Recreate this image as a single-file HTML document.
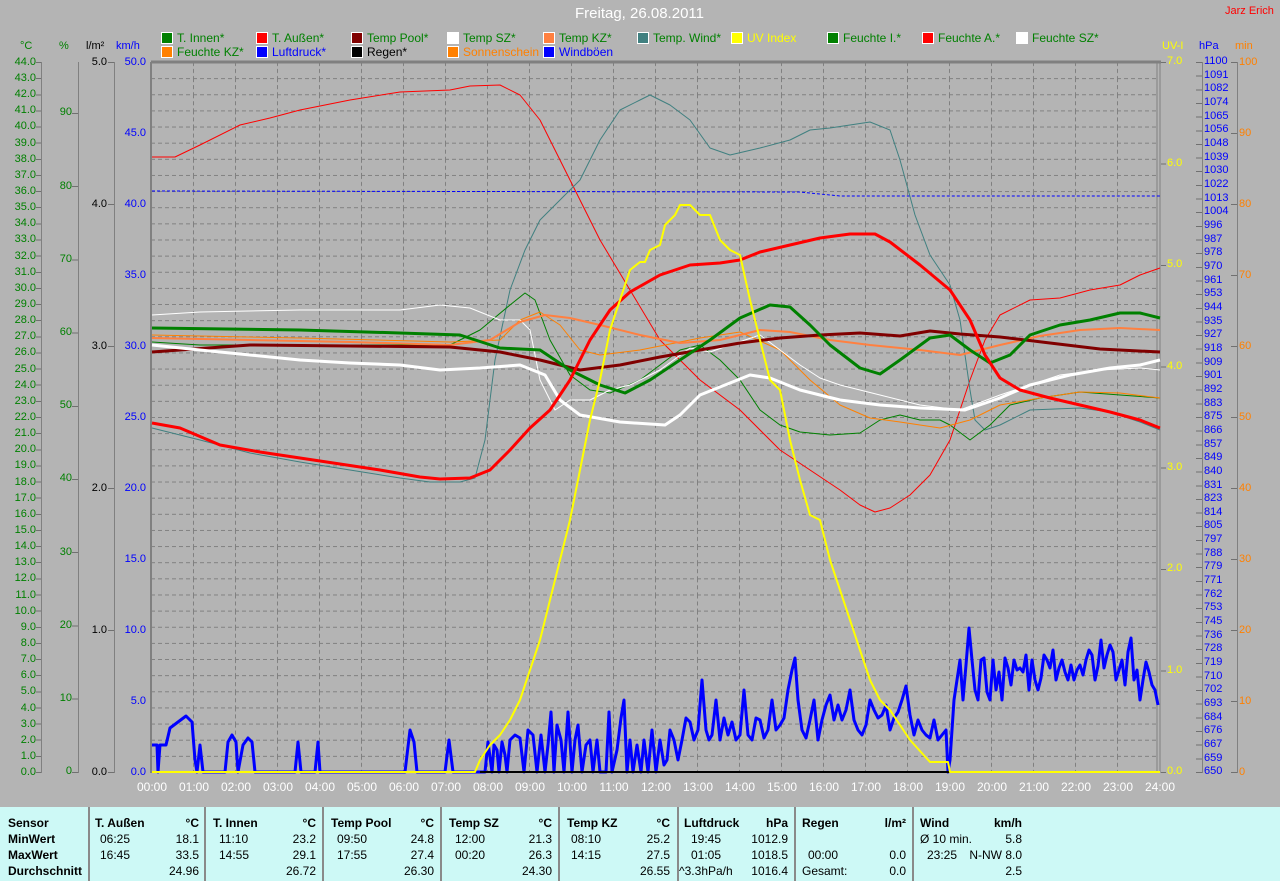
<!DOCTYPE html>
<html><head><meta charset="utf-8">
<style>
*{margin:0;padding:0;box-sizing:border-box}
body{width:1280px;height:881px;overflow:hidden;background:#b4b4b4;font-family:"Liberation Sans",sans-serif;position:relative}
.a{position:absolute}
.col{position:absolute;font-size:11px;white-space:pre}
.r{text-align:right}
.lg{position:absolute;font-size:12px;white-space:nowrap;height:14px;line-height:14px}
.lg i{display:inline-block;width:12px;height:12px;border:1px solid #fff;vertical-align:-2px;margin-right:4px}
.tb{position:absolute;left:0;top:807px;width:1280px;height:74px;background:#cdf9f6;font-size:12px}
.tb div{position:absolute;white-space:nowrap;line-height:16px}
.tb .b{font-weight:bold}
.sep{position:absolute;top:0;width:2px;height:74px;background:#8a8a8a}
</style></head><body>

<div class="a" style="left:575px;top:5px;font-size:15px;color:#fff">Freitag, 26.08.2011</div>
<div class="a" style="left:1225px;top:5px;font-size:11px;color:#f00">Jarz Erich</div>

<!-- legend -->
<div class="lg" style="left:161px;top:31px;color:#008000"><i style="background:#008000"></i>T. Innen*</div>
<div class="lg" style="left:256px;top:31px;color:#008000"><i style="background:#f00"></i>T. Außen*</div>
<div class="lg" style="left:351px;top:31px;color:#008000"><i style="background:#800000"></i>Temp Pool*</div>
<div class="lg" style="left:447px;top:31px;color:#008000"><i style="background:#fff"></i>Temp SZ*</div>
<div class="lg" style="left:543px;top:31px;color:#008000"><i style="background:#ff8040"></i>Temp KZ*</div>
<div class="lg" style="left:637px;top:31px;color:#008000"><i style="background:#408080"></i>Temp. Wind*</div>
<div class="lg" style="left:731px;top:31px;color:#ffff00"><i style="background:#ffff00"></i>UV Index</div>
<div class="lg" style="left:827px;top:31px;color:#008000"><i style="background:#008000"></i>Feuchte I.*</div>
<div class="lg" style="left:922px;top:31px;color:#008000"><i style="background:#f00"></i>Feuchte A.*</div>
<div class="lg" style="left:1016px;top:31px;color:#008000"><i style="background:#fff"></i>Feuchte SZ*</div>
<div class="lg" style="left:161px;top:45px;color:#008000"><i style="background:#ff8000"></i>Feuchte KZ*</div>
<div class="lg" style="left:256px;top:45px;color:#0000ff"><i style="background:#0000ff"></i>Luftdruck*</div>
<div class="lg" style="left:351px;top:45px;color:#000"><i style="background:#000"></i>Regen*</div>
<div class="lg" style="left:447px;top:45px;color:#ff8000"><i style="background:#ff8000"></i>Sonnenschein</div>
<div class="lg" style="left:543px;top:45px;color:#0000ff"><i style="background:#0000ff"></i>Windböen</div>

<!-- axis headers -->
<div class="a" style="left:20px;top:40px;font-size:11px;color:#008000">°C</div>
<div class="a" style="left:59px;top:40px;font-size:11px;color:#008000">%</div>
<div class="a" style="left:86px;top:40px;font-size:11px;color:#000">l/m²</div>
<div class="a" style="left:116px;top:40px;font-size:11px;color:#0000ff">km/h</div>
<div class="a" style="left:1162px;top:40px;font-size:11px;color:#ffff00">UV-I</div>
<div class="a" style="left:1199px;top:40px;font-size:11px;color:#0000ff">hPa</div>
<div class="a" style="left:1235px;top:40px;font-size:11px;color:#ff8000">min</div>

<!-- °C -->
<div class="col r" style="left:0;width:36px;top:53.93px;line-height:16.136px;color:#008000">44.0
43.0
42.0
41.0
40.0
39.0
38.0
37.0
36.0
35.0
34.0
33.0
32.0
31.0
30.0
29.0
28.0
27.0
26.0
25.0
24.0
23.0
22.0
21.0
20.0
19.0
18.0
17.0
16.0
15.0
14.0
13.0
12.0
11.0
10.0
9.0
8.0
7.0
6.0
5.0
4.0
3.0
2.0
1.0
0.0</div>
<div class="a" style="left:36px;top:62px;width:5px;height:712px;background:repeating-linear-gradient(to bottom,#707070 0 1px,transparent 1px 16.136px)"></div>
<div class="a" style="left:41px;top:62px;width:1px;height:711px;background:#808080"></div>

<!-- % -->
<div class="col r" style="left:40px;width:32px;top:76.4px;line-height:73.2px;color:#008000">90
80
70
60
50
40
30
20
10
0</div>
<div class="a" style="left:72px;top:113px;width:6px;height:660px;background:repeating-linear-gradient(to bottom,#707070 0 1px,transparent 1px 73.2px)"></div>
<div class="a" style="left:78px;top:62px;width:1px;height:711px;background:#808080"></div>

<!-- l/m2 -->
<div class="col r" style="left:80px;width:27px;top:-9px;line-height:142px;color:#000">5.0
4.0
3.0
2.0
1.0
0.0</div>
<div class="a" style="left:108px;top:62px;width:6px;height:712px;background:repeating-linear-gradient(to bottom,#707070 0 1px,transparent 1px 142px)"></div>
<div class="a" style="left:114px;top:62px;width:1px;height:711px;background:#808080"></div>

<!-- km/h -->
<div class="col r" style="left:115px;width:31px;top:26.5px;line-height:71px;color:#0000ff">50.0
45.0
40.0
35.0
30.0
25.0
20.0
15.0
10.0
5.0
0.0</div>

<!-- UV -->
<div class="col" style="left:1167px;top:11.3px;line-height:101.43px;color:#ffff00">7.0
6.0
5.0
4.0
3.0
2.0
1.0
0.0</div>
<div class="a" style="left:1161px;top:62px;width:5px;height:712px;background:repeating-linear-gradient(to bottom,#707070 0 1px,transparent 1px 101.43px)"></div>

<!-- hPa -->
<div class="col" style="left:1204px;top:55.17px;line-height:13.654px;color:#0000ff">1100
1091
1082
1074
1065
1056
1048
1039
1030
1022
1013
1004
996
987
978
970
961
953
944
935
927
918
909
901
892
883
875
866
857
849
840
831
823
814
805
797
788
779
771
762
753
745
736
728
719
710
702
693
684
676
667
659
650</div>
<div class="a" style="left:1196px;top:62px;width:6px;height:712px;background:repeating-linear-gradient(to bottom,#707070 0 1px,transparent 1px 13.654px)"></div>
<div class="a" style="left:1202px;top:62px;width:1px;height:711px;background:#808080"></div>

<!-- min -->
<div class="col" style="left:1239px;top:26.5px;line-height:71px;color:#ff8000">100
90
80
70
60
50
40
30
20
10
0</div>
<div class="a" style="left:1231px;top:62px;width:6px;height:712px;background:repeating-linear-gradient(to bottom,#707070 0 1px,transparent 1px 71px)"></div>
<div class="a" style="left:1237px;top:62px;width:1px;height:711px;background:#808080"></div>

<svg class="a" style="left:0;top:0" width="1280" height="881" viewBox="0 0 1280 881">
<defs>
<pattern id="g" x="151" y="62" width="42" height="16.136" patternUnits="userSpaceOnUse">
<line x1="0" y1="0.5" x2="42" y2="0.5" stroke="#808080" stroke-width="1" stroke-dasharray="4,3"/>
<line x1="0.5" y1="0" x2="0.5" y2="16.136" stroke="#808080" stroke-width="1" stroke-dasharray="4,3"/>
</pattern>
</defs>
<rect x="151" y="62" width="1008" height="710" fill="url(#g)"/>
<line x1="151" y1="62" x2="1161" y2="62" stroke="#808080" stroke-width="3"/>
<line x1="151" y1="62" x2="151" y2="773" stroke="#808080" stroke-width="2"/>
<line x1="1157" y1="62" x2="1157" y2="773" stroke="#808080" stroke-width="1"/>
<line x1="1160" y1="62" x2="1160" y2="773" stroke="#808080" stroke-width="1"/>
<g fill="none" stroke-linejoin="round">
<!-- Luftdruck -->
<polyline points="152,191 800,192 840,196 1160,196" stroke="#0000ff" stroke-width="1" stroke-dasharray="3,2"/>
<!-- Feuchte A thin red -->
<polyline stroke="#ff0000" stroke-width="1" points="152,157 175,157 200,145 240,125 270,118 300,110 350,100 400,92 450,90 470,86 500,85 520,95 540,120 560,160 580,200 600,240 630,290 660,340 700,380 740,410 780,450 810,470 840,490 860,505 875,512 890,508 910,495 930,475 950,440 970,380 985,340 1000,315 1030,300 1060,298 1090,290 1120,285 1140,275 1160,268"/>
<!-- Temp Wind teal -->
<polyline stroke="#408080" stroke-width="1" points="152,428 200,440 250,453 300,462 350,470 400,478 430,482 460,482 475,478 485,440 495,360 510,290 525,250 540,220 560,200 580,180 600,140 620,110 640,100 650,95 670,105 690,120 710,148 730,155 760,148 790,140 810,130 830,128 850,125 870,122 890,130 900,160 915,215 930,255 950,285 960,320 970,390 975,420 985,430 1000,425 1030,410 1080,408 1110,412 1140,422 1160,430"/>
<!-- Feuchte I thin green -->
<polyline stroke="#008000" stroke-width="1" points="152,342 200,345 300,345 450,345 480,330 510,305 525,293 535,300 550,340 570,375 590,390 610,393 640,380 660,365 680,350 700,345 720,360 740,380 760,410 780,425 800,432 830,435 860,433 880,420 900,415 920,420 940,420 950,425 970,440 990,425 1010,405 1040,398 1080,392 1120,395 1160,398"/>
<!-- Feuchte KZ thin orange -->
<polyline stroke="#ff8000" stroke-width="1" points="152,335 300,338 450,342 500,340 520,320 540,312 560,325 580,350 600,355 640,350 700,338 740,332 780,350 810,380 840,405 870,418 900,422 940,428 970,420 1000,405 1040,398 1080,392 1120,393 1160,398"/>
<!-- Feuchte SZ thin white -->
<polyline stroke="#ffffff" stroke-width="1" points="152,315 200,312 300,310 400,310 440,305 470,308 500,320 520,320 530,330 540,380 555,410 570,400 590,400 610,390 630,385 660,370 690,348 710,352 730,345 760,335 780,350 800,365 820,378 840,385 880,395 920,405 960,410 1000,395 1030,385 1060,375 1100,370 1140,368 1160,370"/>
<!-- Temp KZ -->
<polyline stroke="#ff8040" stroke-width="2" points="152,338 250,340 350,342 450,345 490,340 520,322 545,315 570,318 600,325 640,335 680,343 720,340 760,330 790,332 830,340 870,345 920,350 960,355 1000,345 1040,336 1080,330 1120,328 1160,330"/>
<!-- Temp Pool -->
<polyline stroke="#800000" stroke-width="3" points="152,352 250,345 350,346 450,347 500,352 540,360 580,370 620,365 660,357 700,350 740,343 780,338 820,335 860,333 900,336 930,331 960,334 1000,337 1050,343 1100,349 1160,352"/>
<!-- T Innen -->
<polyline stroke="#008000" stroke-width="3" points="152,328 300,330 400,333 460,335 500,348 540,350 570,370 600,385 625,393 650,380 680,360 710,340 740,318 770,305 790,307 810,325 830,345 860,368 880,374 900,360 930,338 950,335 970,350 990,363 1010,355 1030,335 1060,325 1090,320 1120,313 1140,313 1160,318"/>
<!-- Temp SZ -->
<polyline stroke="#ffffff" stroke-width="3" points="152,345 200,350 250,355 300,360 350,363 400,365 440,370 480,368 520,365 545,375 560,400 580,415 620,422 665,425 680,415 700,395 730,383 750,375 770,378 800,390 840,400 880,405 920,408 965,410 1000,398 1030,385 1070,375 1110,368 1140,365 1160,360"/>
<!-- T Aussen -->
<polyline stroke="#ff0000" stroke-width="3" points="152,423 180,428 220,445 260,452 300,458 340,464 380,470 420,477 440,479 470,478 490,470 510,450 530,428 550,410 570,380 590,340 610,310 630,292 660,275 690,265 720,263 740,260 760,252 790,245 820,238 850,234 875,234 890,242 920,265 950,290 970,320 985,355 1000,378 1020,390 1050,398 1080,405 1110,412 1140,420 1160,428"/>
<!-- wind gusts -->
<polyline stroke="#0000ff" stroke-width="3" points="152,745 157,745 158,772 160,745 166,745 170,728 178,722 186,716 192,722 195,760 197,772 200,745 203,772 205,772 225,772 228,742 232,735 236,742 238,772 243,745 248,738 252,742 255,772 295,772 298,742 301,772 315,772 318,742 320,772 405,772 410,730 414,742 417,772 445,772 449,740 453,772 485,772 488,742 492,772 494,745 497,750 499,772 502,742 505,755 507,772 510,740 515,735 520,738 524,772 528,730 533,735 537,772 541,735 545,772 548,745 551,712 554,772 557,725 561,740 564,772 568,712 572,772 575,740 578,725 582,772 586,745 590,740 593,772 597,740 600,772 606,772 609,712 612,772 617,750 621,718 624,700 627,772 630,740 633,772 637,745 641,772 644,740 648,772 652,730 656,772 660,740 664,765 667,760 670,730 674,740 678,760 682,740 686,718 690,722 694,740 698,730 702,680 706,730 709,740 712,735 716,700 720,740 724,718 728,735 732,722 736,740 740,735 744,690 748,735 752,740 756,718 760,720 764,738 768,730 772,700 776,730 780,725 784,718 788,690 792,670 795,658 798,700 802,730 806,738 810,720 814,700 818,740 822,720 826,705 830,695 834,720 838,705 842,720 846,710 850,690 854,720 858,730 862,735 866,725 870,700 874,710 878,718 882,715 886,705 890,730 894,718 898,712 902,700 906,686 910,715 914,735 918,720 922,730 926,735 930,738 934,720 938,740 942,735 946,730 948,772 950,760 952,730 954,700 957,680 960,660 963,700 966,665 969,628 972,660 975,690 978,700 981,660 984,658 987,692 990,700 993,660 996,690 999,672 1002,700 1005,658 1008,668 1011,685 1014,660 1017,670 1020,668 1023,672 1026,655 1029,690 1032,660 1035,680 1038,690 1041,678 1044,655 1047,660 1050,668 1053,650 1056,680 1059,668 1062,660 1065,672 1068,680 1071,665 1074,680 1077,670 1080,665 1083,675 1086,660 1089,650 1092,655 1095,680 1098,666 1101,640 1104,668 1107,655 1110,645 1113,652 1116,680 1119,670 1122,660 1125,685 1128,652 1131,638 1134,680 1137,670 1140,700 1143,680 1146,662 1149,672 1152,685 1155,690 1158,705"/>
<!-- rain baseline -->
<line x1="480" y1="772" x2="950" y2="772" stroke="#000" stroke-width="2"/>
<!-- UV -->
<polyline stroke="#ffff00" stroke-width="2" points="152,772 475,772 480,760 490,745 500,735 510,720 520,700 530,670 540,640 550,600 560,560 570,520 580,470 590,420 600,380 610,330 620,300 630,270 640,262 645,262 650,250 660,245 665,225 675,215 680,205 690,205 700,215 710,215 720,240 730,250 740,255 750,300 760,340 770,380 780,390 790,440 800,480 810,515 820,520 830,560 840,590 850,620 860,650 870,680 880,700 890,710 900,725 910,740 930,762 948,762 950,772 1160,772"/>
</g>
<g fill="#fff" font-size="12" font-family="Liberation Sans, sans-serif" text-anchor="middle">
<text x="152" y="791">00:00</text><text x="194" y="791">01:00</text><text x="236" y="791">02:00</text><text x="278" y="791">03:00</text><text x="320" y="791">04:00</text><text x="362" y="791">05:00</text><text x="404" y="791">06:00</text><text x="446" y="791">07:00</text><text x="488" y="791">08:00</text><text x="530" y="791">09:00</text><text x="572" y="791">10:00</text><text x="614" y="791">11:00</text><text x="656" y="791">12:00</text><text x="698" y="791">13:00</text><text x="740" y="791">14:00</text><text x="782" y="791">15:00</text><text x="824" y="791">16:00</text><text x="866" y="791">17:00</text><text x="908" y="791">18:00</text><text x="950" y="791">19:00</text><text x="992" y="791">20:00</text><text x="1034" y="791">21:00</text><text x="1076" y="791">22:00</text><text x="1118" y="791">23:00</text><text x="1160" y="791">24:00</text>
</g>
</svg>

<div class="tb">
<div class="sep" style="left:88px"></div><div class="sep" style="left:204px"></div><div class="sep" style="left:322px"></div><div class="sep" style="left:440px"></div><div class="sep" style="left:558px"></div><div class="sep" style="left:677px"></div><div class="sep" style="left:794px"></div><div class="sep" style="left:912px"></div>

<div class="b" style="left:8px;top:8px">Sensor</div>
<div class="b" style="left:8px;top:24px">MinWert</div>
<div class="b" style="left:8px;top:40px">MaxWert</div>
<div class="b" style="left:8px;top:56px">Durchschnitt</div>

<div class="b" style="left:95px;top:8px">T. Außen</div><div class="b" style="right:1081px;top:8px">°C</div>
<div style="left:100px;top:24px">06:25</div><div style="right:1081px;top:24px">18.1</div>
<div style="left:100px;top:40px">16:45</div><div style="right:1081px;top:40px">33.5</div>
<div style="right:1081px;top:56px">24.96</div>

<div class="b" style="left:213px;top:8px">T. Innen</div><div class="b" style="right:964px;top:8px">°C</div>
<div style="left:219px;top:24px">11:10</div><div style="right:964px;top:24px">23.2</div>
<div style="left:219px;top:40px">14:55</div><div style="right:964px;top:40px">29.1</div>
<div style="right:964px;top:56px">26.72</div>

<div class="b" style="left:331px;top:8px">Temp Pool</div><div class="b" style="right:846px;top:8px">°C</div>
<div style="left:337px;top:24px">09:50</div><div style="right:846px;top:24px">24.8</div>
<div style="left:337px;top:40px">17:55</div><div style="right:846px;top:40px">27.4</div>
<div style="right:846px;top:56px">26.30</div>

<div class="b" style="left:449px;top:8px">Temp SZ</div><div class="b" style="right:728px;top:8px">°C</div>
<div style="left:455px;top:24px">12:00</div><div style="right:728px;top:24px">21.3</div>
<div style="left:455px;top:40px">00:20</div><div style="right:728px;top:40px">26.3</div>
<div style="right:728px;top:56px">24.30</div>

<div class="b" style="left:567px;top:8px">Temp KZ</div><div class="b" style="right:610px;top:8px">°C</div>
<div style="left:571px;top:24px">08:10</div><div style="right:610px;top:24px">25.2</div>
<div style="left:571px;top:40px">14:15</div><div style="right:610px;top:40px">27.5</div>
<div style="right:610px;top:56px">26.55</div>

<div class="b" style="left:684px;top:8px">Luftdruck</div><div class="b" style="right:492px;top:8px">hPa</div>
<div style="left:691px;top:24px">19:45</div><div style="right:492px;top:24px">1012.9</div>
<div style="left:691px;top:40px">01:05</div><div style="right:492px;top:40px">1018.5</div>
<div style="left:679px;top:56px">^3.3hPa/h</div><div style="right:492px;top:56px">1016.4</div>

<div class="b" style="left:802px;top:8px">Regen</div><div class="b" style="right:374px;top:8px">l/m²</div>
<div style="left:808px;top:40px">00:00</div><div style="right:374px;top:40px">0.0</div>
<div style="left:802px;top:56px">Gesamt:</div><div style="right:374px;top:56px">0.0</div>

<div class="b" style="left:920px;top:8px">Wind</div><div class="b" style="right:258px;top:8px">km/h</div>
<div style="left:920px;top:24px">Ø 10 min.</div><div style="right:258px;top:24px">5.8</div>
<div style="left:927px;top:40px">23:25</div><div style="right:258px;top:40px">N-NW 8.0</div>
<div style="right:258px;top:56px">2.5</div>
</div>
</body></html>
